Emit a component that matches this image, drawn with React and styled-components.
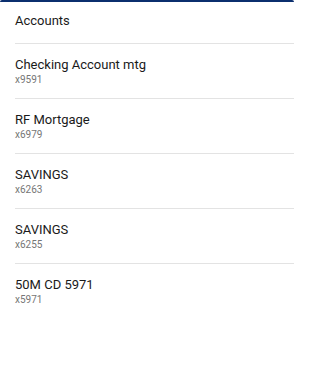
import styled, { createGlobalStyle } from 'styled-components'

const GlobalStyle = createGlobalStyle`
  html, body {
    margin: 0;
    padding: 0;
    background: #fff;
  }
  body {
    font-family: Roboto, "Liberation Sans", Arial, sans-serif;
    -webkit-font-smoothing: antialiased;
  }
`

const Panel = styled.section`
  width: 294px;
  min-height: 366px;
  background: #fff;
  border-top: 2px solid #0b2f6e;
  border-radius: 2px 2px 0 0;
  box-sizing: border-box;
`

const Header = styled.h2`
  margin: 0;
  padding: 11px 0 14px 15px;
  font-size: 13px;
  line-height: 16px;
  font-weight: 400;
  color: #1a1a1a;
`

const List = styled.ul`
  list-style: none;
  margin: 0;
  padding: 0 0 0 15px;
`

const Row = styled.li`
  border-top: 1px solid #e3e3e3;
  padding: 12px 0;
  display: flex;
  flex-direction: column;
`

const Name = styled.span`
  font-size: 13px;
  line-height: 17px;
  font-weight: 400;
  color: #1a1a1a;
`

const Mask = styled.span`
  font-size: 10px;
  line-height: 13px;
  color: #767676;
`

const accounts = [
  { name: 'Checking Account mtg', mask: 'x9591' },
  { name: 'RF Mortgage', mask: 'x6979' },
  { name: 'SAVINGS', mask: 'x6263' },
  { name: 'SAVINGS', mask: 'x6255' },
  { name: '50M CD 5971', mask: 'x5971' },
]

export default function App() {
  return (
    <>
      <GlobalStyle />
      <Panel>
        <Header>Accounts</Header>
        <List>
          {accounts.map((a, i) => (
            <Row key={i}>
              <Name>{a.name}</Name>
              <Mask>{a.mask}</Mask>
            </Row>
          ))}
        </List>
      </Panel>
    </>
  )
}
